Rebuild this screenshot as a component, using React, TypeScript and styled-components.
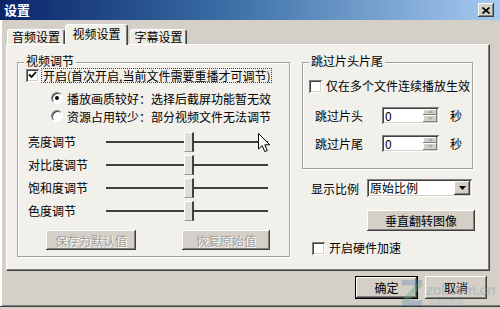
import React from "react";
import styled, { createGlobalStyle } from "styled-components";

const FACE = "#d4d0c8";
const PAGE = "#f1f0eb";

const raised = `box-shadow: inset -1px -1px #404040, inset 1px 1px #fff, inset -2px -2px #808080, inset 2px 2px ${FACE};`;
const sunken = `box-shadow: inset 1px 1px #808080, inset -1px -1px #fff, inset 2px 2px #404040, inset -2px -2px ${FACE};`;

const GlobalStyle = createGlobalStyle`
  html, body {
    margin: 0;
    padding: 0;
    background: ${FACE};
  }
  body {
    font-family: "Noto Sans CJK SC", "Liberation Sans", sans-serif;
    font-size: 12px;
    color: #000;
  }
`;

const Window = styled.div`
  position: relative;
  width: 500px;
  height: 307px;
  box-sizing: border-box;
  background: ${FACE};
  border-bottom: 1px solid #404040;
  box-shadow: inset 2px 0 #fff, inset 0 -1px #808080;
  display: flex;
  flex-direction: column;
  overflow: hidden;
`;

const TitleBar = styled.div`
  flex: none;
  height: 20px;
  display: flex;
  align-items: center;
  justify-content: space-between;
  padding: 0 6px 0 4px;
  background: linear-gradient(90deg, #0a246a 0%, #3a6ea5 45%, #a6caf0 100%);
`;

const Title = styled.span`
  color: #fff;
  font-weight: 700;
  font-size: 13px;
  line-height: 16px;
`;

const CloseButton = styled.div`
  width: 16px;
  height: 14px;
  background: ${FACE};
  ${raised}
  display: flex;
  align-items: center;
  justify-content: center;
`;

const Body = styled.div`
  padding: 4px 10px 0 6px;
  display: flex;
  flex-direction: column;
`;

const TabRow = styled.div`
  display: flex;
  align-items: flex-end;
  height: 20px;
  position: relative;
  z-index: 1;
`;

const Tab = styled.div<{ $w: number; $ml: number; $active?: boolean }>`
  box-sizing: border-box;
  width: ${(p) => p.$w}px;
  margin-left: ${(p) => p.$ml}px;
  height: ${(p) => (p.$active ? 21 : 15)}px;
  margin-bottom: ${(p) => (p.$active ? -1 : 0)}px;
  padding-bottom: ${(p) => (p.$active ? 3 : 0)}px;
  background: ${(p) => (p.$active ? PAGE : "#eceae4")};
  border-top: 1px solid #fff;
  border-left: 1px solid #fff;
  border-right: 1px solid #404040;
  box-shadow: inset -1px 0 #808080;
  border-radius: 3px 3px 0 0;
  display: flex;
  align-items: center;
  justify-content: center;
  line-height: 14px;
`;

const Panel = styled.div`
  box-sizing: border-box;
  height: 227px;
  background: ${PAGE};
  border-top: 1px solid #fff;
  border-left: 1px solid #fff;
  border-right: 1px solid #404040;
  border-bottom: 1px solid #404040;
  box-shadow: inset -1px -1px #808080;
  display: grid;
  grid-template-columns: 273px 171px;
  column-gap: 12px;
  align-items: start;
  padding: 17px 0 0 10px;
`;

const GroupBox = styled.div<{ $h: number; $pt: number; $pl: number }>`
  position: relative;
  box-sizing: border-box;
  height: ${(p) => p.$h}px;
  border: 1px solid #a3a098;
  box-shadow: 1px 1px 0 #fff, inset 1px 1px 0 #fff;
  padding: ${(p) => p.$pt}px 0 0 ${(p) => p.$pl}px;
  display: flex;
  flex-direction: column;
`;

const Legend = styled.span`
  position: absolute;
  top: -8px;
  left: 6px;
  padding: 0 2px;
  background: ${PAGE};
  line-height: 12px;
`;

const CheckRow = styled.div<{ $mt?: number; $ml?: number }>`
  display: flex;
  align-items: center;
  height: 16px;
  gap: 4px;
  margin-top: ${(p) => p.$mt ?? 0}px;
  margin-left: ${(p) => p.$ml ?? 0}px;
  line-height: 14px;
  white-space: nowrap;
`;

const Box = styled.span`
  flex: none;
  width: 13px;
  height: 13px;
  background: #fff;
  ${sunken}
  display: flex;
  align-items: center;
  justify-content: center;
`;

const FocusLabel = styled.span`
  outline: 1px dotted #444;
  padding: 0 1px;
  margin-left: -1px;
  line-height: 13px;
`;

const RadioRow = styled.div<{ $mt?: number }>`
  display: flex;
  align-items: center;
  height: 18px;
  gap: 4px;
  margin-left: 25px;
  margin-top: ${(p) => p.$mt ?? 0}px;
  white-space: nowrap;
`;

const Radio = styled.span<{ $on?: boolean }>`
  flex: none;
  box-sizing: border-box;
  width: 12px;
  height: 12px;
  border-radius: 50%;
  background: #fff;
  border: 1px solid;
  border-color: #808080 #fff #fff #808080;
  box-shadow: inset 1px 1px #404040;
  display: flex;
  align-items: center;
  justify-content: center;
  &::after {
    content: "";
    width: 4px;
    height: 4px;
    border-radius: 50%;
    background: ${(p) => (p.$on ? "#000" : "transparent")};
  }
`;

const SliderRow = styled.div<{ $mt?: number }>`
  display: flex;
  align-items: center;
  height: 23px;
  padding-left: 2px;
  margin-top: ${(p) => p.$mt ?? 0}px;
`;

const SliderLabel = styled.span`
  flex: none;
  width: 78px;
`;

const TRACK_W = 162;
const THUMB_W = 10;

const Track = styled.div`
  position: relative;
  width: ${TRACK_W}px;
  height: 20px;
  &::before {
    content: "";
    position: absolute;
    left: 0;
    right: 0;
    top: 9px;
    height: 2px;
    background: #3f3f3f;
  }
`;

const Thumb = styled.div`
  position: absolute;
  top: 0;
  box-sizing: border-box;
  width: ${THUMB_W}px;
  height: 20px;
  background: #e0ded8;
  border-top: 1px solid #fff;
  border-left: 1px solid #fff;
  border-bottom: 1px solid #9a9790;
  border-right: 2px solid #404040;
`;

const ButtonRow = styled.div`
  display: flex;
  gap: 46px;
  margin-top: 8px;
  padding-left: 20px;
`;

const WinButton = styled.button<{ $w: number; $h?: number; $default?: boolean }>`
  box-sizing: border-box;
  width: ${(p) => p.$w}px;
  height: ${(p) => p.$h ?? 20}px;
  padding: 0;
  background: ${FACE};
  border: ${(p) => (p.$default ? "1px solid #000" : "none")};
  ${raised}
  font-family: inherit;
  font-size: 12px;
  color: #000;
  &:disabled {
    color: #a09e98;
    text-shadow: 1px 1px 0 #fff;
  }
`;

const RightColumn = styled.div`
  display: flex;
  flex-direction: column;
`;

const FieldRow = styled.div<{ $mt: number; $pl: number }>`
  display: flex;
  align-items: center;
  height: 20px;
  margin-top: ${(p) => p.$mt}px;
  padding-left: ${(p) => p.$pl}px;
  white-space: nowrap;
`;

const FieldLabel = styled.span<{ $w: number }>`
  flex: none;
  width: ${(p) => p.$w}px;
`;

const SpinBox = styled.div`
  box-sizing: border-box;
  width: 57px;
  height: 17px;
  background: #fff;
  ${sunken}
  padding: 2px 2px 2px 3px;
  display: flex;
  align-items: center;
  justify-content: space-between;
  line-height: 13px;
`;

const SpinButtons = styled.div`
  width: 14px;
  height: 13px;
  display: flex;
  flex-direction: column;
`;

const SpinHalf = styled.div`
  flex: 1;
  background: ${FACE};
  box-shadow: inset -1px -1px #808080, inset 1px 1px #fff;
  display: flex;
  align-items: center;
  justify-content: center;
`;

const Unit = styled.span`
  margin-left: 11px;
`;

const SelectBox = styled.div`
  box-sizing: border-box;
  width: 105px;
  height: 18px;
  background: #fff;
  ${sunken}
  padding: 2px 2px 2px 3px;
  display: flex;
  align-items: center;
  justify-content: space-between;
  line-height: 14px;
`;

const DropButton = styled.div`
  width: 16px;
  height: 14px;
  background: ${FACE};
  ${raised}
  display: flex;
  align-items: center;
  justify-content: center;
`;

const FlipButton = styled(WinButton)`
  margin-top: 12px;
  margin-left: 65px;
`;

const Footer = styled.div`
  display: flex;
  justify-content: flex-end;
  gap: 7px;
  margin-top: 5px;
  padding-right: 3px;
`;

const Cursor = styled.svg`
  position: absolute;
  left: 258px;
  top: 133px;
`;

const Watermark = styled.div`
  position: absolute;
  left: 400px;
  top: 278px;
  display: flex;
  align-items: flex-start;
  gap: 2px;
  opacity: 0.55;
  pointer-events: none;
`;

const MarkText = styled.div`
  display: flex;
  flex-direction: column;
  margin-top: 5px;
`;

const MarkUrl = styled.span`
  font-family: "Liberation Sans", Arial, sans-serif;
  font-weight: 700;
  font-size: 14px;
  line-height: 15px;
  color: rgba(150, 166, 186, 0.8);
  letter-spacing: -0.3px;
`;

const MarkSub = styled.span`
  font-size: 7px;
  line-height: 9px;
  color: rgba(160, 170, 185, 0.9);
  margin-left: 2px;
`;

const Check = () => (
  <svg width="9" height="8" viewBox="0 0 9 8">
    <polyline points="1,3.5 3.5,6 8,1" fill="none" stroke="#000" strokeWidth="1.8" />
  </svg>
);

const sliders = [
  { label: "亮度调节", value: 51 },
  { label: "对比度调节", value: 51 },
  { label: "饱和度调节", value: 51 },
  { label: "色度调节", value: 51 },
];

const App = () => {
  return (
    <>
      <GlobalStyle />
      <Window>
        <TitleBar>
          <Title>设置</Title>
          <CloseButton>
            <svg width="8" height="7" viewBox="0 0 8 7">
              <path d="M0.5 0.5 L7.5 6.5 M7.5 0.5 L0.5 6.5" stroke="#000" strokeWidth="1.6" />
            </svg>
          </CloseButton>
        </TitleBar>
        <Body>
          <TabRow>
            <Tab $w={58} $ml={1}>音频设置</Tab>
            <Tab $w={63} $ml={0} $active>视频设置</Tab>
            <Tab $w={57} $ml={2}>字幕设置</Tab>
          </TabRow>
          <Panel>
            <GroupBox $h={195} $pt={4} $pl={8}>
              <Legend>视频调节</Legend>
              <CheckRow>
                <Box>
                  <Check />
                </Box>
                <FocusLabel>开启(首次开启,当前文件需要重播才可调节)</FocusLabel>
              </CheckRow>
              <RadioRow $mt={6}>
                <Radio $on />
                播放画质较好：选择后截屏功能暂无效
              </RadioRow>
              <RadioRow>
                <Radio />
                资源占用较少：部分视频文件无法调节
              </RadioRow>
              {sliders.map((s, i) => (
                <SliderRow key={s.label} $mt={i === 0 ? 5 : 0}>
                  <SliderLabel>{s.label}</SliderLabel>
                  <Track>
                    <Thumb
                      style={{
                        left: Math.round((s.value / 100) * (TRACK_W - THUMB_W)),
                      }}
                    />
                  </Track>
                </SliderRow>
              ))}
              <ButtonRow>
                <WinButton $w={90} disabled>
                  保存为默认值
                </WinButton>
                <WinButton $w={88} disabled>
                  恢复原始值
                </WinButton>
              </ButtonRow>
            </GroupBox>
            <RightColumn>
              <GroupBox $h={107} $pt={15} $pl={6}>
                <Legend>跳过片头片尾</Legend>
                <CheckRow>
                  <Box />
                  <span>仅在多个文件连续播放生效</span>
                </CheckRow>
                {["跳过片头", "跳过片尾"].map((label, i) => (
                  <FieldRow key={label} $mt={i === 0 ? 11 : 8} $pl={6}>
                    <FieldLabel $w={67}>{label}</FieldLabel>
                    <SpinBox>
                      <span>0</span>
                      <SpinButtons>
                        <SpinHalf>
                          <svg width="5" height="3" viewBox="0 0 5 3">
                            <path d="M0 3 L2.5 0 L5 3 Z" fill="#a8a6a0" />
                          </svg>
                        </SpinHalf>
                        <SpinHalf>
                          <svg width="5" height="3" viewBox="0 0 5 3">
                            <path d="M0 0 L2.5 3 L5 0 Z" fill="#a8a6a0" />
                          </svg>
                        </SpinHalf>
                      </SpinButtons>
                    </SpinBox>
                    <Unit>秒</Unit>
                  </FieldRow>
                ))}
              </GroupBox>
              <FieldRow $mt={9} $pl={9}>
                <FieldLabel $w={56}>显示比例</FieldLabel>
                <SelectBox>
                  <span>原始比例</span>
                  <DropButton>
                    <svg width="7" height="4" viewBox="0 0 7 4">
                      <path d="M0 0 L7 0 L3.5 4 Z" fill="#000" />
                    </svg>
                  </DropButton>
                </SelectBox>
              </FieldRow>
              <FlipButton $w={108} $h={21}>
                垂直翻转图像
              </FlipButton>
              <CheckRow $mt={9} $ml={10}>
                <Box />
                <span>开启硬件加速</span>
              </CheckRow>
            </RightColumn>
          </Panel>
          <Footer>
            <WinButton $w={63} $h={23} $default>
              确定
            </WinButton>
            <WinButton $w={62} $h={23}>
              取消
            </WinButton>
          </Footer>
        </Body>
        <Cursor width="13" height="20" viewBox="0 0 13 20">
          <path
            d="M0.5 0.5 L0.5 16 L4.2 12.6 L6.8 18.6 L9.3 17.5 L6.8 11.8 L11.8 11.8 Z"
            fill="#fff"
            stroke="#000"
            strokeWidth="1"
          />
        </Cursor>
        <Watermark>
          <svg width="24" height="28" viewBox="0 0 26 30">
            <path d="M2 2 L24 2 L24 8 L10 24 L24 24 L24 30 L2 30 L2 24 L16 8 L2 8 Z" fill="rgba(80,120,190,0.55)" />
            <path d="M16 8 L24 2 L24 8 L10 24 L2 30 L2 24 Z" fill="rgba(120,190,90,0.45)" />
          </svg>
          <MarkText>
            <MarkUrl>zol.com.cn</MarkUrl>
            <MarkSub>中关村在线</MarkSub>
          </MarkText>
        </Watermark>
      </Window>
    </>
  );
};

export default App;
